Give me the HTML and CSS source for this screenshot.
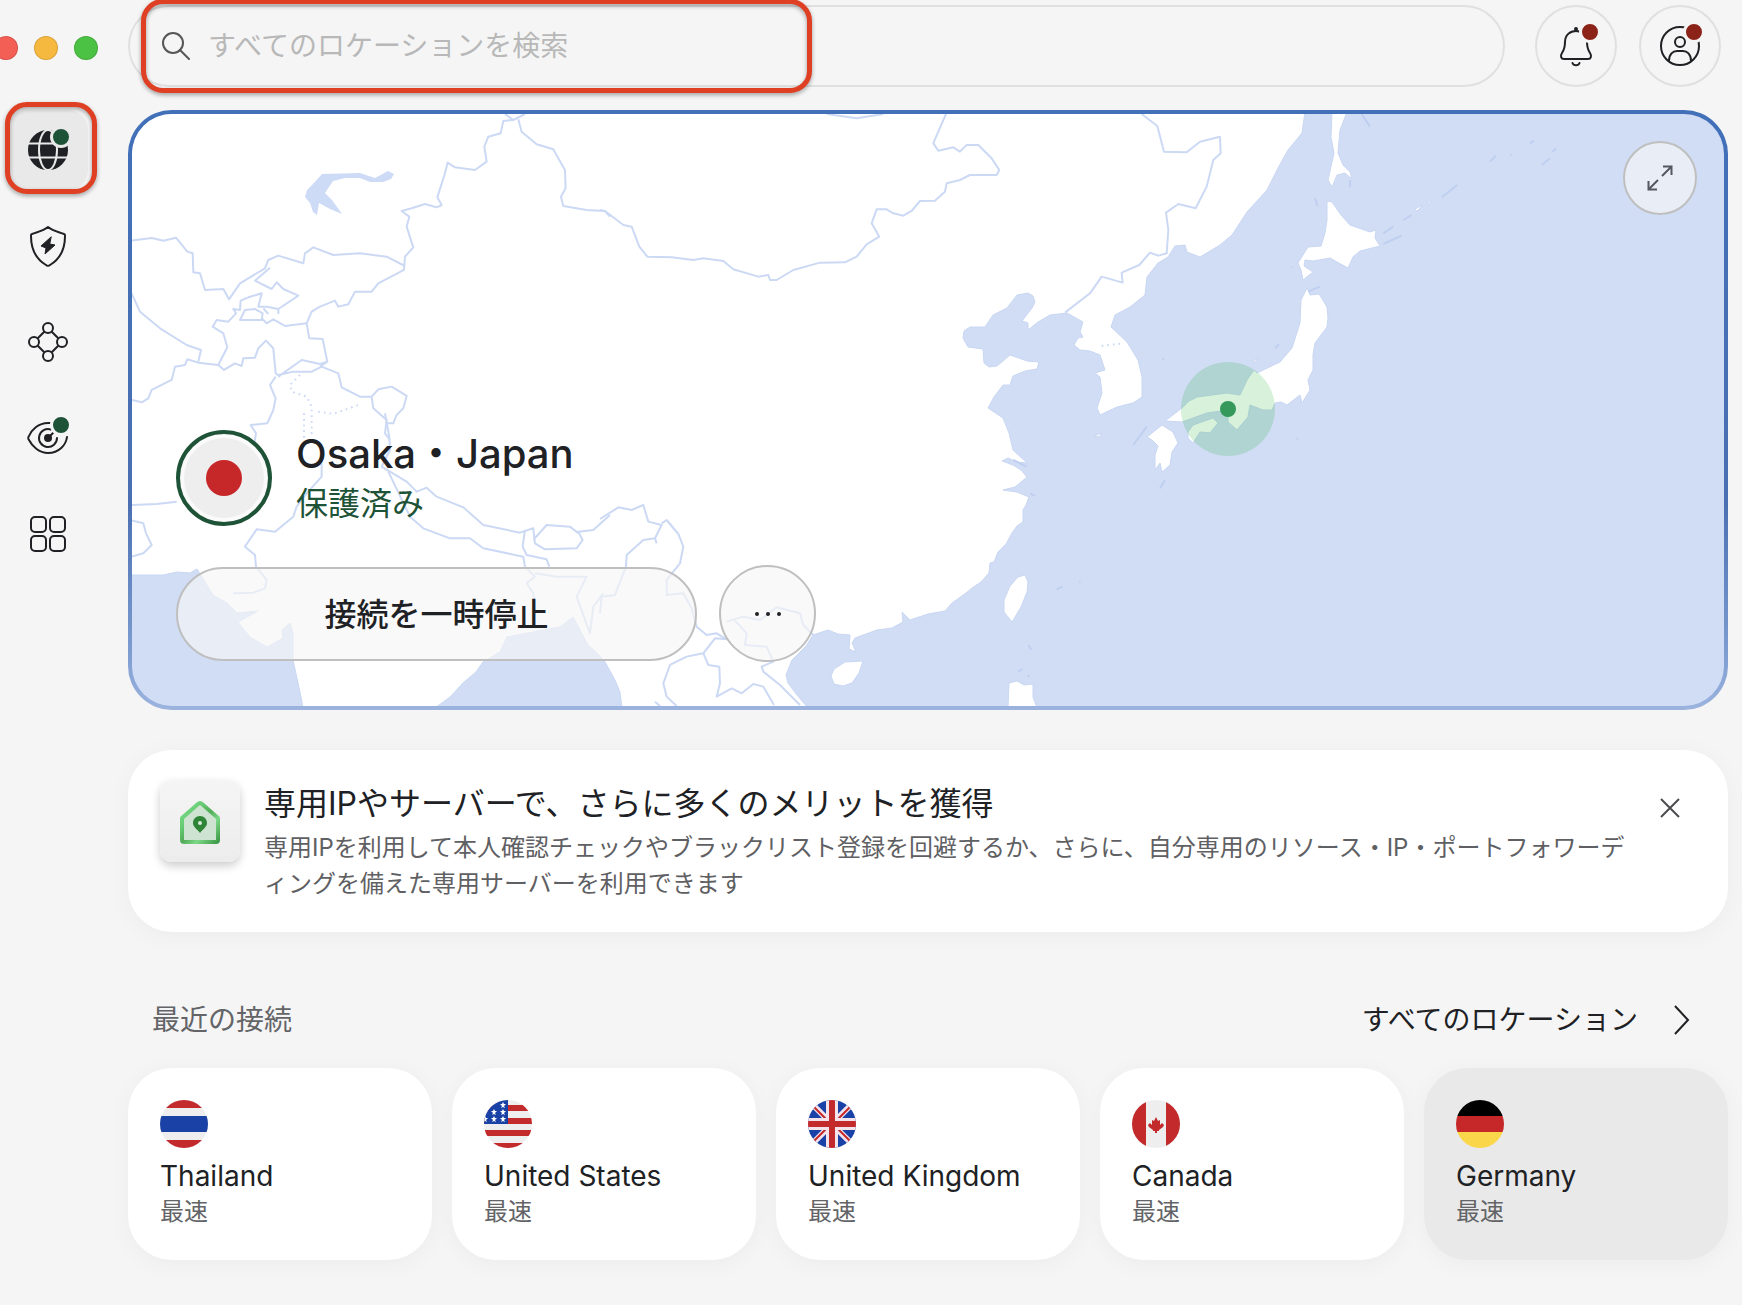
FILE: index.html
```html
<!DOCTYPE html>
<html lang="ja">
<head>
<meta charset="utf-8">
<title>VPN</title>
<meta name="viewport" content="width=device-width, initial-scale=1">
<link rel="stylesheet" href="styles.css">
</head>
<body>
<div class="app">
  <header class="topbar">
    <div class="lights">
      <span class="light light-close"></span>
      <span class="light light-min"></span>
      <span class="light light-max"></span>
    </div>
    <div class="search">
      <svg class="search-icon" viewBox="0 0 32 32" aria-hidden="true"><circle cx="13" cy="13" r="10"/><path d="M20 20l9 9"/></svg>
      <input class="search-input" type="text" aria-label="すべてのロケーションを検索" placeholder="すべてのロケーションを検索">
      <span class="callout callout-search"></span>
    </div>
    <button class="round-button bell-button" type="button" aria-label="通知">
      <svg class="icon" viewBox="0 0 48 48" aria-hidden="true"><path d="M24 9c-6 0-11 4-11 11 0 5-1 8-3 11-2 3-1 6 2 6h24c3 0 4-3 2-6-2-3-3-6-3-11 0-7-5-11-11-11z"/><path d="M20.500 41c1 3 6 3 7 0"/><circle class="solid" cx="24" cy="7" r="1"/></svg>
      <span class="badge badge-alert"></span>
    </button>
    <button class="round-button" type="button" aria-label="アカウント">
      <svg class="icon" viewBox="0 0 48 48" aria-hidden="true"><circle cx="24" cy="24" r="19"/><circle cx="24" cy="20" r="5"/><path d="M13 39c0-7 4-10 8-10h6c4 0 8 3 8 10"/></svg>
      <span class="badge badge-alert"></span>
    </button>
  </header>

  <nav class="sidebar">
    <button class="nav-item nav-active" type="button" aria-label="ロケーション">
      <svg class="icon" viewBox="0 0 48 48" aria-hidden="true"><circle class="solid" cx="24" cy="24" r="19"/><g class="globe-lines"><path d="M3 17.500h42M3 31.500h42"/><ellipse cx="24" cy="24" rx="9" ry="20"/></g></svg>
      <span class="badge badge-ok"></span>
      <span class="callout callout-nav"></span>
    </button>
    <button class="nav-item" type="button" aria-label="脅威対策">
      <svg class="icon" viewBox="0 0 48 48" aria-hidden="true"><path d="M24 5c-5 4-11 5-16 7-1 0-1 1-1 2 0 13 5 23 15 29 1 1 3 1 4 0 10-6 15-16 15-29 0-1 0-2-1-2-5-2-11-3-16-7z"/><path class="bolt" d="M27 15L17 24l5 2-1 6 10-9-5-1z"/></svg>
    </button>
    <button class="nav-item" type="button" aria-label="メッシュネット">
      <svg class="icon" viewBox="0 0 48 48" aria-hidden="true"><circle cx="24" cy="10" r="5"/><circle cx="10" cy="24" r="5"/><circle cx="38" cy="24" r="5"/><circle cx="24" cy="38" r="5"/><path d="M20 14l-6 6M28 14l6 6M14 28l6 6M34 28l-6 6"/></svg>
    </button>
    <button class="nav-item" type="button" aria-label="ダークウェブモニター">
      <svg class="icon" viewBox="0 0 48 48" aria-hidden="true"><path d="M26 9C14 8 7 17 5 22c-1 1-1 3 0 4 3 6 10 13 19 13 11 0 18-8 19-16"/><path d="M27 15.500A9 9 0 1 0 33 24"/><circle class="solid" cx="24" cy="24" r="3"/><path d="M24 24l5-5"/></svg>
      <span class="badge badge-ok"></span>
    </button>
    <button class="nav-item" type="button" aria-label="製品一覧">
      <svg class="icon" viewBox="0 0 48 48" aria-hidden="true"><rect x="7" y="7" width="15" height="15" rx="4"/><rect x="26" y="7" width="15" height="15" rx="4"/><rect x="7" y="26" width="15" height="15" rx="4"/><rect x="26" y="26" width="15" height="15" rx="4"/></svg>
    </button>
  </nav>

  <main class="content">
    <section class="map-card">
      <svg class="map" viewBox="132 114 1592 592" preserveAspectRatio="xMidYMid slice" aria-hidden="true">
        <g class="land">
          <path d="M130 112H1305L1302 133 1288 150 1278 168 1267 190 1247 212 1232 235 1220 245 1200 257 1187 252 1185 245 1175 246 1168 257 1158 263 1147 277 1145 295 1130 307 1115 315 1111 327 1127 342 1138 360 1142 377 1142 397 1133 403 1117 407 1100 415 1097 408 1102 393 1100 377 1095 373 1105 370 1100 355 1090 351 1080 350 1074 345 1078 338 1083 337 1080 332 1083 322 1067 313 1050 315 1038 322 1028 330 1028 323 1022 321 1032 308 1035 302 1033 296 1028 293 1017 295 1007 308 993 315 985 327 970 327 964 331 963 338 968 347 983 349 984 363 989 367 997 366 1010 355 1027 361 1039 362 1037 369 1025 371 1013 376 1010 385 1003 385 994 397 988 408 1003 418 1009 433 1013 450 1027 463 1017 462 1008 458 1002 461 1013 465 1021 470 1027 477 1015 487 1003 490 1017 492 1029 497 1026 505 1023 510 1023 522 1017 526 1012 533 1006 544 998 552 994 562 990 563 989 573 981 582 972 588 966 593 952 603 945 611 928 614 910 620 902 612 903 622 892 628 877 630 855 638 852 643 856 652 849 649 850 635 838 634 828 630 813 635 806 646 792 660 786 675 788 683 797 695 808 708H622L620 692 615 680 605 662 597 653 588 645 580 630 573 617 560 627 543 630 507 637 500 652 483 662 476 672 463 683 450 697 435 708H303L301 697 298 683 293 660 293 633 290 623 282 630 283 638 267 647 250 637 238 622 258 611 237 613 227 603 213 595 205 582 197 569 190 573 177 572 163 575 130 575Z"/>
          <path d="M1025 575L1028 582 1027 592 1021 607 1012 622 1004 612 1004 600 1010 586 1018 577Z"/>
          <path d="M863 661L859 673 852 683 843 686 834 684 831 676 834 669 845 662Z"/>
          <path d="M1008 708L1009 683 1017 681 1024 685 1033 684 1033 697 1037 708Z"/>
          <path d="M1332 112L1331 137 1334 153 1328 180 1332 187 1337 175 1345 173 1352 179 1350 172 1343 165 1338 153 1340 130 1347 112Z"/>
          <path d="M1327 201L1332 202 1341 215 1350 225 1370 232 1376 230 1375 238 1380 246 1360 251 1353 257 1348 268 1337 262 1330 258 1313 261 1305 260 1304 266 1313 272 1303 280 1301 270 1298 263 1308 247 1321 246 1325 233 1327 220Z"/>
          <path d="M1307 288L1310 295 1319 294 1321 297 1327 307 1328 318 1327 327 1315 343 1313 355 1313 370 1308 380 1310 390 1302 403 1300 395 1287 405 1281 402 1275 403 1272 410 1263 410 1250 405 1248 417 1242 424 1237 430 1228 422 1228 410 1207 413 1182 422 1165 421 1182 408 1189 401 1197 397 1227 393 1240 395 1247 380 1254 370 1257 373 1280 362 1292 348 1300 323 1301 300Z"/>
          <path d="M1188 432L1193 425 1213 418 1218 423 1210 433 1200 432 1193 443 1188 438Z"/>
          <path d="M1162 425L1173 432 1178 443 1172 452 1170 465 1162 472 1160 463 1155 470 1155 455 1158 446 1152 440 1147 437Z"/>
          <path d="M1094 436l8-3-3 4zM1253 361l5-3-4 5zM1415 209l8-4-6 6zM1427 203l6-3-4 4zM1391 224l4-2-2 3z"/>
        </g>
        <path class="lake" d="M322 174L360 173 375 178 388 171 394 174 391 179 383 182 370 182 360 178 345 178 333 181 325 193 332 200 342 214 330 209 319 203 317 215 313 212 310 203 305 197 307 190 312 185Z"/>
        <g class="borders">
          <g transform="translate(130 110) scale(.3333)">
            <path d="M1125 12L1150 30 1185 12M1165 28L1175 65 1220 103 1270 118 1285 145 1305 180 1307 235 1293 260 1300 288 1370 300 1425 303 1440 320"/>
            <path d="M1150 30L1120 33 1112 70 1075 80 1063 110 1070 155 1035 180 975 172 953 158 945 190 922 262 935 285 920 292 885 282 845 295 815 303 838 320 830 350 850 412 825 440 822 480 745 520 725 545 675 545 655 583 625 590 615 572 570 590 545 605 530 640 538 685 578 687 592 755 570 770"/>
            <path d="M825 468L770 440 690 430 610 435 550 412 525 430 520 460 445 437 415 450 405 475 330 520 297 568 280 537 225 540 210 490 190 487 188 430 172 425 138 383 100 392 65 384 5 392"/>
            <path d="M420 473L375 512 425 537 440 517 460 537 505 557 445 597 410 590 385 590 395 550 355 562 332 572 330 600 310 597 318 610 295 635 260 630 248 650 280 670 292 712 265 765 282 780 315 760 335 768 340 745 375 743 385 715 408 692 430 715 437 790 450 800"/>
            <path d="M330 630L395 630 398 610 375 597 345 600ZM395 625L410 640 430 628 465 648 530 640M400 595L415 612M445 597V612"/>
            <path d="M0 540L30 605 90 655 170 705 213 720 205 755M265 765L205 758 172 748 165 765 135 770 125 810 65 840 55 865 35 877 5 870"/>
            <path d="M437 800L420 825 437 865 430 900 412 940 362 945 378 970 374 995M445 800L515 750 570 762 592 755M445 795L490 785 545 785 575 770 625 790 635 832 690 860 725 860 730 895 770 930 765 970 780 990M725 860L745 838 785 830 830 858 820 895 800 915 790 940 770 940"/>
            <path class="dotted" d="M510 795L480 825 485 845 530 860 545 890 545 980M565 905L610 912 685 885M522 910V990"/>
          </g>
          <g transform="translate(130 400) scale(.3333)">
            <path d="M765 40L778 110 780 150 755 200 830 245 860 275 890 263 920 290 1000 322 1060 375 1170 398 1210 385 1215 430 1245 448 1340 445 1358 420 1345 395 1390 390 1440 345M1210 420L1250 375 1320 380 1345 400"/>
            <path d="M1185 390L1178 440 1190 465 1250 478 1258 500M775 215L840 350 880 385 960 415 1020 415 1060 445 1180 470 1185 500"/>
            <path d="M575 190V230L530 280 500 320 490 350 435 395 380 388 345 440 375 465 378 500 410 540 405 565 370 578 310 580"/>
            <path d="M0 315L80 312 140 305M0 360L40 370 48 400 65 435 40 460 5 470"/>
            <path d="M1185 500L1215 530 1190 550 1210 580 1215 640M1215 520L1280 530 1370 530 1340 590 1380 700 1390 620 1420 580"/>
          </g>
          <g transform="translate(600 110) scale(.3333)">
            <path d="M0 300L15 303 70 345 95 350 118 410 142 440 215 442 280 450 310 445 370 453 400 478 475 500 505 495 510 510 530 510 580 480 660 458 735 457 770 440 800 403 838 380 815 340 830 298 860 298 880 310 910 317 935 303 960 273 1005 272 1035 245 1040 220 1080 210 1110 195 1190 195 1198 180 1175 145 1135 105 1100 105 1080 125 1060 112 1015 122 1000 100 1015 65 1038 12M680 12L770 25 850 12"/>
          </g>
          <g transform="translate(1050 110) scale(.3333)">
            <path d="M275 12L322 48 342 125 410 127 450 95 510 80 512 130 490 150 470 230 437 295 385 282 348 308 355 360 350 430 325 437 300 428 268 465 215 488 218 518 155 500 120 550 45 608"/>
            <path class="dotted" d="M155 708L220 700"/>
            <path class="islets" d="M1000 370L1030 350M1060 330L1085 315M1175 262L1222 225M1000 402L1055 377M900 210V232M935 12L960 50M795 265L803 288M725 470v4M675 715l12-12M340 745v6M290 950l-40 55M345 1110l-15 25M742 985v4M1320 155l18-18M1380 135h5M1440 100l12-8M775 545l35-15M1475 165l25-20M1507 125l12-10"/>
          </g>
          <g transform="translate(600 400) scale(.3333)">
            <path d="M0 357L55 322 95 330 130 315 145 365 185 375 165 415 130 420 80 465 78 500 45 585 5 590 0 640M165 415L170 430M185 370L200 360 235 402 250 440 240 490 200 540 200 585 250 580 275 625 290 680 320 705 350 700 380 718 345 715 310 760 260 770 210 795 190 850 200 890 230 918"/>
            <path d="M310 760L325 795 358 800 360 850 350 890 395 865 425 880 460 852 490 860 522 915M380 665L430 650 480 660 530 622 600 640 610 675 640 705M405 662L440 700 435 735 500 740 520 785 485 800 490 815 540 855 600 915M165 905l15 13"/>
            <path class="islets" d="M1370 568l18-8M1438 545h4M1285 735l10 15M1255 815l12-8M1283 825l5 5M1290 280l15 8M1240 180l40 20"/>
          </g>
        </g>
        <circle class="halo" cx="1228" cy="409" r="47"/>
        <circle class="pin" cx="1228" cy="409" r="8"/>
      </svg>
      <button class="glass expand-button" type="button" aria-label="地図を拡大">
        <svg class="icon" viewBox="0 0 48 48" aria-hidden="true"><path d="M26 22L36 12M27 12.500h8.500V21M22 26L12 36M12.500 27v8.500H21"/></svg>
      </button>
      <div class="status">
        <div class="place">
          <span class="flag-ring"><svg class="flag-large" viewBox="0 0 80 80" aria-hidden="true"><circle cx="40" cy="40" r="40" fill="#eee"/><circle cx="40" cy="40" r="18" fill="#c62729"/></svg></span>
          <div>
            <h1 class="place-name">Osaka・Japan</h1>
            <p class="place-state">保護済み</p>
          </div>
        </div>
        <div class="actions">
          <button class="glass pause-button" type="button">接続を一時停止</button>
          <button class="glass more-button" type="button" aria-label="その他">
            <svg class="icon" viewBox="0 0 48 48" aria-hidden="true"><circle class="solid" cx="13" cy="24" r="1"/><circle class="solid" cx="24" cy="24" r="1"/><circle class="solid" cx="35" cy="24" r="1"/></svg>
          </button>
        </div>
      </div>
    </section>

    <section class="promo">
      <span class="promo-tile">
        <svg class="promo-icon" viewBox="0 0 44 48" aria-hidden="true">
          <defs><linearGradient id="house" x1="0" y1="0" x2="1" y2="1"><stop offset="0" stop-color="#7fdc8c"/><stop offset=".3" stop-color="#66cc74"/><stop offset=".5" stop-color="#52ab58"/><stop offset=".7" stop-color="#7bd886"/><stop offset="1" stop-color="#3f9a48"/></linearGradient></defs>
          <path d="M4 21L20 7q2-2 4 0L40 21V43q0 2-2 2H6q-2 0-2-2z" fill="#cfe3d3" stroke="url(#house)" stroke-width="4" stroke-linejoin="round"/>
          <path d="M22 19c-4 0-7 3-7 7s4 6 7 10c3-4 7-6 7-10s-3-7-7-7z" fill="#2e8538"/><circle cx="22" cy="26" r="2" fill="#d5ead8"/>
        </svg>
      </span>
      <div class="promo-text">
        <h2 class="promo-title">専用IPやサーバーで、さらに多くのメリットを獲得</h2>
        <p class="promo-desc">専用IPを利用して本人確認チェックやブラックリスト登録を回避するか、さらに、自分専用のリソース・IP・ポートフォワーディングを備えた専用サーバーを利用できます</p>
      </div>
      <button class="close-button" type="button" aria-label="閉じる"><svg class="close-icon" viewBox="0 0 32 32" aria-hidden="true"><path d="M7 7l18 18M25 7L7 25"/></svg></button>
    </section>

    <section>
      <div class="recent-head">
        <h2 class="recent-title">最近の接続</h2>
        <a class="all-link" href="#">すべてのロケーション<svg class="chevron" viewBox="0 0 16 30" aria-hidden="true"><path d="M1 1l13 14L1 29"/></svg></a>
      </div>
      <div class="cards">
        <button class="card" type="button">
          <svg class="flag" viewBox="0 0 48 48" aria-hidden="true"><path fill="#eee" d="M0 0h48v48H0z"/><path fill="#c22a2c" d="M0 0h48v8H0zM0 40h48v8H0z"/><path fill="#1a41a5" d="M0 16h48v16H0z"/></svg>
          <span class="card-name">Thailand</span><span class="card-sub">最速</span>
        </button>
        <button class="card" type="button">
          <svg class="flag" viewBox="0 0 48 48" aria-hidden="true"><path fill="#eee" d="M0 0h48v48H0z"/><path fill="#c22a2c" d="M0 5h48v6H0zM0 18h48v6H0zM0 30h48v6H0zM0 43h48v5H0z"/><path fill="#1a41a5" d="M0 0h24v24H0z"/><g fill="#fff"><path id="star" d="M19 2l1 2h2l-2 2 1 2-2-1-2 1 1-2-2-2h2z"/><use href="#star" x="0" y="7"/><use href="#star" x="0" y="14"/><use href="#star" x="-9" y="7"/><use href="#star" x="-9" y="14"/><use href="#star" x="-18" y="14"/></g></svg>
          <span class="card-name">United States</span><span class="card-sub">最速</span>
        </button>
        <button class="card" type="button">
          <svg class="flag" viewBox="0 0 48 48" aria-hidden="true"><path fill="#1a41a5" d="M0 0h48v48H0z"/><path stroke="#f3e4ec" stroke-width="6" d="M4 4l40 40M44 4L4 44"/><path stroke="#c22a2c" stroke-width="2" d="M4 5l14 14M44 5L30 19M30 29l14 14M18 29L4 43"/><path stroke="#f3e4ec" stroke-width="12" d="M24 0v48M0 24h48"/><path stroke="#c22a2c" stroke-width="6" d="M24 0v48M0 24h48"/></svg>
          <span class="card-name">United Kingdom</span><span class="card-sub">最速</span>
        </button>
        <button class="card" type="button">
          <svg class="flag" viewBox="0 0 48 48" aria-hidden="true"><path fill="#eee" d="M0 0h48v48H0z"/><path fill="#c22a2c" d="M0 0h14v48H0zM34 0h14v48H34zM24 17l2 4 2-1v5l2-2 2 2-1 2-4 3v1h-2v2h-2v-2h-2v-1l-4-3-1-2 2-2 2 2v-5l2 1z"/></svg>
          <span class="card-name">Canada</span><span class="card-sub">最速</span>
        </button>
        <button class="card card-hover" type="button">
          <svg class="flag" viewBox="0 0 48 48" aria-hidden="true"><path fill="#000" d="M0 0h48v16H0z"/><path fill="#c62729" d="M0 16h48v16H0z"/><path fill="#fad74a" d="M0 32h48v16H0z"/></svg>
          <span class="card-name">Germany</span><span class="card-sub">最速</span>
        </button>
      </div>
    </section>
  </main>
</div>
</body>
</html>
```
FILE: styles.css
```css
* { box-sizing: border-box; }

body {
  margin: 0;
  background: #f5f5f5;
  color: #202124;
  font-family: Inter, "Noto Sans CJK JP", sans-serif;
  overflow-x: hidden;
}

button {
  margin: 0;
  padding: 0;
  border: 0;
  background: none;
  color: inherit;
  font: inherit;
  text-align: left;
  cursor: pointer;
}

h1, h2, p { margin: 0; font-weight: 400; }

svg { display: block; }

.app {
  display: grid;
  grid-template-columns: 128px minmax(0, 1fr);
  row-gap: 23px;
  min-height: 100vh;
  grid-template-rows: auto 1fr;
}

/* Top bar */
.topbar {
  grid-column: 1 / -1;
  display: flex;
  align-items: center;
  padding: 5px 21px 0 0;
}

.lights {
  display: flex;
  gap: 16px;
  width: 128px;
  padding-top: 4px;
}

.light {
  width: 24px;
  height: 24px;
  border: 1px solid rgba(0, 0, 0, .12);
  border-radius: 50%;
}

.light-close { margin-left: -6px; background: #f35f55; }
.light-min { background: #f6b940; }
.light-max { background: #4bc244; }

.search {
  position: relative;
  display: flex;
  flex: 1;
  align-items: center;
  gap: 16px;
  height: 82px;
  padding: 0 30px;
  border: 2px solid #e0e0e0;
  border-radius: 41px;
}

.search-icon {
  width: 32px;
  height: 32px;
  fill: none;
  stroke: #555;
  stroke-width: 2;
  stroke-linecap: round;
}

.search-input {
  flex: 1;
  min-width: 0;
  height: 48px;
  padding: 0;
  border: 0;
  outline: 0;
  background: none;
  color: #202124;
  font: inherit;
  font-size: 28px;
}

.search-input::placeholder { color: #b8b8b8; opacity: 1; }

.round-button {
  position: relative;
  display: grid;
  place-items: center;
  width: 82px;
  height: 82px;
  margin-left: 22px;
  border: 2px solid #e0e0e0;
  border-radius: 50%;
}

.bell-button { margin-left: 30px; }

.icon {
  width: 48px;
  height: 48px;
  fill: none;
  stroke: #202124;
  stroke-width: 2;
  stroke-linecap: round;
  stroke-linejoin: round;
}

.icon .solid, .icon .bolt { fill: #202124; }
.icon .bolt { stroke-width: 1; }
.globe-lines { stroke: #e9e9e9; }

.badge {
  position: absolute;
  width: 22px;
  height: 22px;
  border: 3px solid #f5f5f5;
  border-radius: 50%;
}

.badge-alert { top: 14px; right: 14px; background: #8c2318; }
.badge-ok { top: 16px; right: 16px; background: #1e5337; }

.callout {
  position: absolute;
  z-index: 2;
  border: 5px solid #df3f22;
  border-radius: 22px;
  filter: drop-shadow(0 2px 2px rgba(0, 0, 0, .35));
  pointer-events: none;
}

.callout-search { top: -8px; left: 11px; width: 671px; height: 94px; }
.callout-nav { top: -8px; left: -3px; width: 92px; height: 92px; }

/* Sidebar */
.sidebar {
  display: flex;
  flex-direction: column;
  gap: 16px;
  padding-left: 8px;
}

.nav-item {
  position: relative;
  display: grid;
  place-items: center;
  width: 80px;
  height: 80px;
  border-radius: 20px;
}

.nav-active { background: #e9e9e9; }
.nav-active .badge { border-color: #e9e9e9; }

/* Map */
.content { padding: 0 14px 40px 0; }

.map-card {
  position: relative;
  display: flex;
  flex-direction: column;
  justify-content: flex-end;
  min-height: 600px;
  padding: 4px;
  border-radius: 44px;
  background: linear-gradient(#4170b9, #4a6fb2 65%, #7c9cd0 90%, #9cb3de);
}

.map {
  position: absolute;
  top: 4px;
  left: 4px;
  width: calc(100% - 8px);
  height: calc(100% - 8px);
  border-radius: 40px;
  background: #d1ddf5;
}

.land { fill: #fff; stroke: #c9d7f2; stroke-width: 1; stroke-linejoin: round; }
.lake { fill: #cddbf6; }
.borders { fill: none; stroke: #ccd9f4; stroke-width: 6; stroke-linejoin: round; }
.islets { stroke: #bfcfef; }
.dotted { stroke-dasharray: 5 12; }
.halo { fill: rgba(15, 172, 43, .17); }
.pin { fill: #34995a; }

.glass {
  border: 2px solid #bfbfbf;
  background: rgba(246, 246, 246, .65);
}

.expand-button {
  position: absolute;
  top: 31px;
  right: 31px;
  display: grid;
  place-items: center;
  width: 74px;
  height: 74px;
  border-radius: 50%;
}

.expand-button .icon { stroke: #55585e; stroke-linecap: butt; stroke-linejoin: miter; }

.status { position: relative; padding: 0 44px 44px; }

.place { display: flex; align-items: center; gap: 24px; }

.flag-ring {
  display: grid;
  place-items: center;
  width: 96px;
  height: 96px;
  border: 4px solid #1e5337;
  border-radius: 50%;
  background: #fafafa;
}

.flag-large { width: 80px; height: 80px; }

.place-name { font-size: 40px; font-weight: 500; line-height: 52px; }

.place-state {
  color: #1e5337;
  font-size: 32px;
  line-height: 48px;
}

.actions { display: flex; align-items: center; gap: 22px; margin-top: 37px; }

.pause-button {
  width: 521px;
  height: 94px;
  padding-bottom: 4px;
  border-radius: 47px;
  font-size: 32px;
  font-weight: 500;
  text-align: center;
}

.more-button {
  display: grid;
  place-items: center;
  width: 97px;
  height: 97px;
  border-radius: 50%;
}

/* Promo */
.promo {
  display: flex;
  align-items: flex-start;
  margin-top: 40px;
  padding: 30px 42px 30px 32px;
  border-radius: 44px;
  background: #fff;
  box-shadow: 0 4px 24px rgba(0, 0, 0, .04);
}

.promo-tile {
  display: grid;
  place-items: center;
  width: 80px;
  height: 82px;
  border-radius: 12px;
  background: linear-gradient(#f5f5f5, #ececec);
  box-shadow: 0 4px 10px rgba(0, 0, 0, .2);
}

.promo-icon { width: 44px; height: 48px; }

.promo-text { flex: 1; padding: 0 14px 0 24px; }

.promo-title { font-size: 32px; line-height: 48px; }

.promo-desc {
  margin-top: 2px;
  color: #5f6063;
  font-size: 24px;
  line-height: 36px;
}

.close-button { width: 32px; height: 32px; margin-top: 12px; }

.close-icon, .chevron {
  fill: none;
  stroke: #202124;
  stroke-width: 2;
}

.close-icon { stroke: #4a4b4e; }

/* Recent connections */
.recent-head {
  display: flex;
  justify-content: space-between;
  margin: 68px 38px 28px 24px;
  font-size: 28px;
  line-height: 40px;
}

.recent-title { color: #636467; font-size: 28px; }

.all-link {
  display: flex;
  align-items: center;
  gap: 36px;
  color: #202124;
  text-decoration: none;
}

.chevron { width: 16px; height: 30px; }

.cards {
  display: grid;
  grid-template-columns: repeat(5, minmax(0, 1fr));
  gap: 20px;
}

.card {
  display: flex;
  flex-direction: column;
  padding: 32px;
  border-radius: 44px;
  background: #fff;
  box-shadow: 0 4px 24px rgba(0, 0, 0, .04);
}

.card-hover { background: #e9e9e9; }

.flag { width: 48px; height: 48px; border-radius: 50%; }

.card-name { margin-top: 8px; font-size: 28px; line-height: 40px; }

.card-sub { color: #636467; font-size: 24px; line-height: 32px; }
```
